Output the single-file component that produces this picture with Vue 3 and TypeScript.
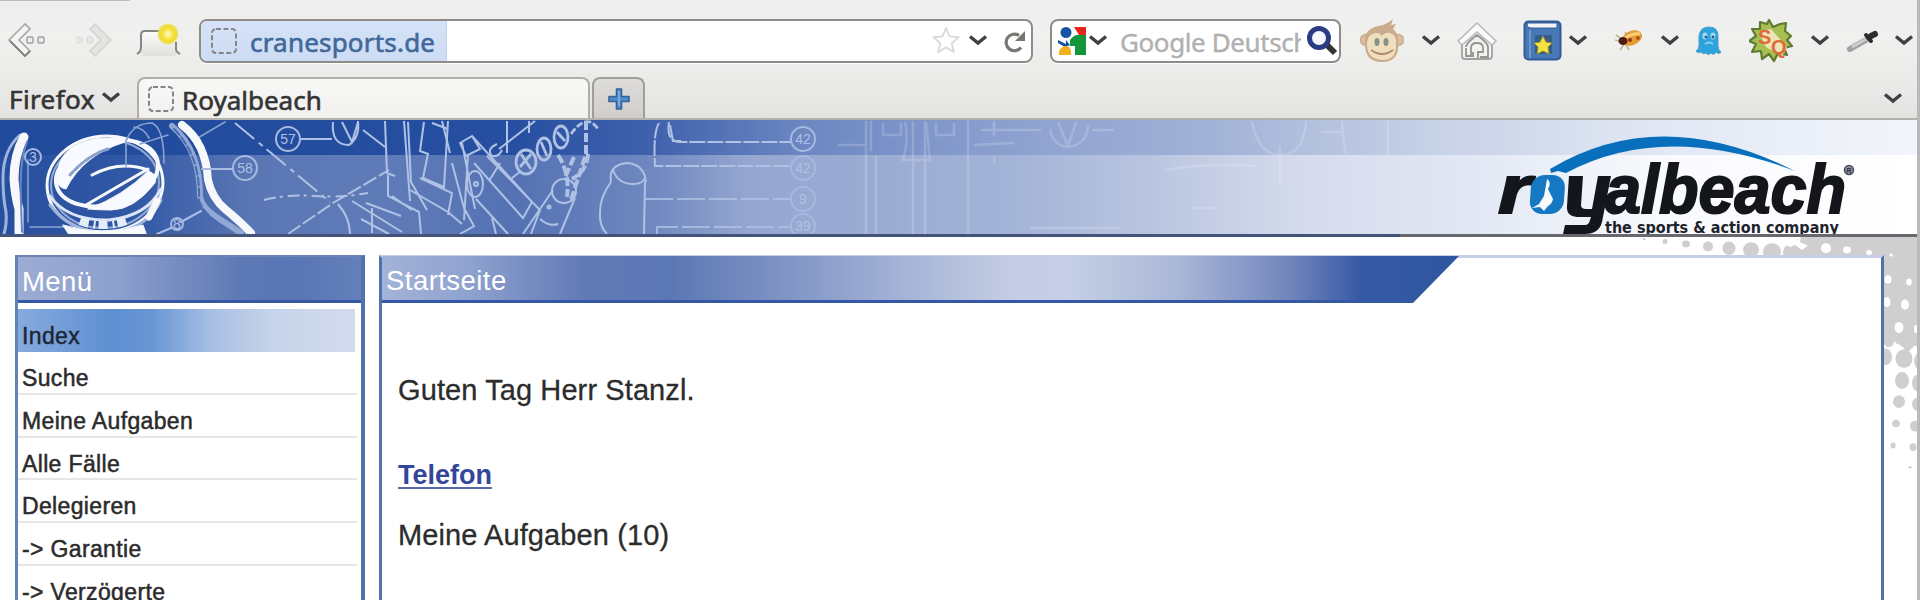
<script setup lang="ts">
interface Dot { x: number; y: number; rx: number; ry: number }
interface Marker { x: number; y: number; r: number; label: string }

const menu: string[] = ['Index', 'Suche', 'Meine Aufgaben', 'Alle Fälle', 'Delegieren', '-> Garantie', '-> Verzögerte']

const dot = (x: number, y: number, rx: number, ry: number = rx): Dot => ({ x, y, rx, ry })

const grayDots: Dot[] = [
  dot(1644, 240, 1.5), dot(1665, 243, 2.5, 3), dot(1686, 246, 4), dot(1708, 249, 5, 6), dot(1729, 251, 6.5, 8), dot(1751, 253, 8, 9),
  dot(1772, 255, 9, 10), dot(1794, 256, 11), dot(1816, 257, 12),
  dot(1885, 380, 7, 10), dot(1904, 382, 8.5, 11), dot(1920, 385, 6, 10), dot(1902, 408, 7, 10), dot(1918, 411, 6, 10),
  dot(1899, 433, 6, 7.5), dot(1918, 436, 6, 8), dot(1896, 459, 3.8, 4.5), dot(1915, 462, 5, 6.5), dot(1893, 485, 2.5, 3.5),
  dot(1913, 487, 3.5, 4.5), dot(1910, 511, 1.5)
]
const whiteDots: Dot[] = [
  dot(1826, 251, 5, 6), dot(1847, 253, 4), dot(1869, 256, 3), dot(1891, 259, 1.8),
  dot(1888, 288, 3.5, 5), dot(1909, 291, 2.8, 4), dot(1887, 315, 3.5, 6), dot(1905, 318, 4, 6), dot(1899, 345, 4.5, 6.5), dot(1916, 347, 2, 5)
]
const markers: Marker[] = [
  { x: 288, y: 139, r: 12, label: '57' }, { x: 245, y: 168, r: 12, label: '58' }, { x: 177, y: 224, r: 6, label: '8' }, { x: 33, y: 157, r: 8, label: '3' },
  { x: 803, y: 139, r: 12, label: '42' }, { x: 803, y: 168, r: 12, label: '42' }, { x: 803, y: 199, r: 12, label: '9' }, { x: 803, y: 226, r: 12, label: '39' }
]
</script>

<template>
  <div class="window">
    <header class="chrome">
      <div class="top-edge"></div>
      <div class="nav-row">
        <svg class="back" width="40" height="38" viewBox="0 0 40 38">
          <path d="M18 2 2 18l16 16 5-5-11-11 11-11z" fill="#f4f4f3" stroke="#a5a5a3" stroke-width="1.6" />
          <path d="M3 19l15 15 5-5" fill="none" stroke="#81817f" stroke-width="1.8" />
          <rect x="20" y="15" width="6" height="6" rx="1.5" fill="#eee" stroke="#9f9f9d" stroke-width="1.5" />
          <rect x="31" y="15" width="6" height="6" rx="1.5" fill="#eee" stroke="#9f9f9d" stroke-width="1.5" />
        </svg>
        <svg class="forward" width="40" height="38" viewBox="0 0 40 38">
          <path d="M22 2 38 18 22 34l-5-5 11-11L17 7z" fill="#e4e4e3" stroke="#d3d3d1" stroke-width="1.5" />
          <rect x="14" y="15" width="6" height="6" rx="1.5" fill="#e8e8e7" stroke="#d3d3d1" />
          <rect x="4" y="15" width="5" height="6" rx="1.5" fill="#e8e8e7" stroke="#d9d9d7" />
        </svg>
        <svg class="new-tab" width="47" height="38" viewBox="0 0 47 38">
          <defs>
            <linearGradient id="tabfade" x1="0" y1="0" x2="0" y2="1"><stop offset="0" stop-color="#fafafa" /><stop offset="1" stop-color="#dfdfdd" /></linearGradient>
            <radialGradient id="glow"><stop offset="0" stop-color="#fffbd0" /><stop offset=".5" stop-color="#f5e236" /><stop offset=".8" stop-color="#ecd93c" /><stop offset="1" stop-color="#f1e77b" stop-opacity=".3" /></radialGradient>
          </defs>
          <path d="M6 34V10h34v24z" fill="url(#tabfade)" />
          <path d="M1 32q4-2 4-7V13q0-4 4-4h16M40 20v7q0 3 4 5" fill="none" stroke="#858583" stroke-width="2" />
          <circle cx="32" cy="12" r="11" fill="url(#glow)" />
        </svg>

        <div class="field address">
          <div class="host">
            <svg width="28" height="28" viewBox="0 0 28 28"><rect x="2" y="2" width="24" height="24" rx="4" class="blank" /></svg>
            <span class="host-name">cranesports.de</span>
          </div>
          <svg class="star" width="30" height="30" viewBox="0 0 30 30"><path d="M15 2l3.6 8.4 9 .8-6.8 6 2 8.8L15 21.4 7.200 26l2-8.800-6.800-6 9-.8z" fill="#fff" stroke="#dadada" stroke-width="1.9" stroke-linejoin="round" /></svg>
          <svg class="chev addr-chev" width="20" height="14" viewBox="0 0 20 14"><path d="M2 2.500 10 9l8-6.500" /></svg>
          <svg class="reload" width="25" height="25" viewBox="0 0 25 25"><path d="M19 18.500A8.300 8.300 0 1 1 17 6.500" fill="none" stroke="#777672" stroke-width="3.200" /><path d="M23 2v10H13z" fill="#777672" /></svg>
        </div>

        <div class="field search">
          <svg class="google" width="30" height="30" viewBox="0 0 30 30">
            <path d="M16 1h12v8H16z" fill="#e4261c" /><path d="M12 14q4-5 7-5h9v20H17v-9h-5z" fill="#12963b" /><path d="M16 1l5 8h-5z" fill="#fff" />
            <circle cx="8" cy="6.500" r="5.500" fill="#1553a5" /><path d="M0 14l8 4v-4l4 5-5 2-7-4z" fill="#1553a5" />
            <path d="M1 29v-4q3-5 7-5t5 5v4z" fill="#f2b01d" />
          </svg>
          <svg class="chev" width="20" height="14" viewBox="0 0 20 14"><path d="M2 2.500 10 9l8-6.500" /></svg>
          <span class="engine">Google Deutschland</span>
          <svg class="lens" width="32" height="32" viewBox="0 0 32 32"><path d="M20 19l9 9" stroke="#333336" stroke-width="6" /><circle cx="13" cy="13" r="9.500" fill="#f4f7fb" stroke="#2b3b84" stroke-width="5" /></svg>
        </div>

        <svg class="monkey" width="44" height="46" viewBox="0 0 44 46">
          <circle cx="6" cy="22" r="5.500" fill="#d9bfa0" stroke="#c9ad90" stroke-width="1.500" /><circle cx="38" cy="22" r="5.500" fill="#d9bfa0" stroke="#c9ad90" stroke-width="1.500" />
          <path d="M5 24Q4 11 18 8q8-1 15-7l-2 6 5-1-3 5q6 5 5 13 2 20-16 20Q4 44 5 24z" fill="#caab8b" />
          <path d="M7 24q1-8 9-9 4 0 6 3 3-4 8-3 7 2 6 11 1 16-14 16Q6 41 7 24z" fill="#f0dfbd" />
          <ellipse cx="17" cy="24" rx="2.500" ry="4" fill="#84918b" /><ellipse cx="26" cy="24" rx="2.500" ry="4" fill="#84918b" />
          <path d="M11 32q11 8 22 0" fill="none" stroke="#ad8b6a" stroke-width="1.800" />
        </svg>
        <svg class="chev c1" width="20" height="14" viewBox="0 0 20 14"><path d="M2 2.500 10 9l8-6.500" /></svg>
        <svg class="home" width="40" height="40" viewBox="0 0 40 40">
          <path d="M5 21v14q0 3 3 3h24q3 0 3-3V21" fill="#f2f2f1" stroke="#a1a1a0" stroke-width="1.800" />
          <path d="M20 2 1 20l4 4 15-13 15 13 4-4z" fill="#fbfbfb" stroke="#b8b8b6" stroke-width="1.600" stroke-linejoin="round" />
          <path d="M9 26q0-4 11-12 11 8 11 12M14 35V27q0-5 6-5t6 5v4h-5v6M9 27v8h7v-4M31 26v10h-8" fill="none" stroke="#949492" stroke-width="1.800" />
        </svg>
        <svg class="book" width="40" height="42" viewBox="0 0 40 42">
          <rect x="1.500" y="1.500" width="36" height="38" rx="4" fill="#4878b5" stroke="#2f5b98" stroke-width="2" />
          <path d="M5 3h29v5H8q-4 0-4-3z" fill="#f2f5f8" stroke="#345c95" /><path d="M7 10v28" stroke="#6c98cc" stroke-width="2" />
          <rect x="12" y="15" width="17" height="19" fill="#365f87" /><path d="M20 16l3 6 6 1-4 4 1 7-6-3-6 3 1-7-4-4 6-1z" fill="#f5e23e" stroke="#958e36" />
        </svg>
        <svg class="chev c2" width="20" height="14" viewBox="0 0 20 14"><path d="M2 2.500 10 9l8-6.500" /></svg>
        <svg class="bug" width="30" height="26" viewBox="0 0 30 26">
          <path d="M2 7l7 5M1 12l8 2M6 22l5-7M15 22l-3-5M11 4l4 5" stroke="#c6b698" stroke-width="1.600" />
          <ellipse cx="18" cy="10" rx="10.500" ry="7" transform="rotate(-23 18 10)" fill="#e69a32" /><path d="M11 10q8-5 15-4" stroke="#fbd077" stroke-width="3" fill="none" />
          <ellipse cx="9" cy="13" rx="4.500" ry="4" fill="#4c1c17" /><circle cx="16" cy="12" r="2" fill="#963719" /><circle cx="24" cy="10" r="2" fill="#b1531d" />
        </svg>
        <svg class="chev c3" width="20" height="14" viewBox="0 0 20 14"><path d="M2 2.500 10 9l8-6.500" /></svg>
        <svg class="ghost" width="28" height="30" viewBox="0 0 28 30">
          <path d="M4 20V10q1-9 10-9t9 9v10q0 4 3 6-2 3-5 0-2 4-5 1-3 3-5 0-3 2-5-1-3 2-5-1 3-2 3-5z" fill="#2ba3dc" stroke="#4e9fc7" />
          <ellipse cx="10" cy="10" rx="2.500" ry="3.500" fill="#a5daf3" /><ellipse cx="18" cy="10" rx="2.500" ry="3.500" fill="#a5daf3" /><circle cx="11" cy="11" r="1.500" fill="#1c648e" /><circle cx="18" cy="11" r="1.500" fill="#1c648e" /><path d="M10 18q4-3 8 0" stroke="#8bd0f0" stroke-width="2" fill="none" />
        </svg>
        <svg class="gear" width="46" height="44" viewBox="0 0 46 44">
          <path d="M20 1l4 7 7-3 6-1-1 8 6 5-4 4 5 6-8 2 3 7-9-2-4 8-5-7-7 5-1-8-9 1 4-8-7-3 7-5-4-7 8 0 0-7 7 2z" fill="#a8bd52" stroke="#5d7c30" stroke-width="2.200" stroke-linejoin="round" />
          <path d="M10 13l12-3 16 18-5 9-16-9z" fill="#efe4b8" />
          <text x="9" y="25" class="gear-text">S</text><text x="22" y="35" class="gear-text">Q</text>
        </svg>
        <svg class="chev c4" width="20" height="14" viewBox="0 0 20 14"><path d="M2 2.500 10 9l8-6.500" /></svg>
        <svg class="dropper" width="34" height="24" viewBox="0 0 34 24">
          <path d="M4 20 20 11" stroke="#a0a0a0" stroke-width="6" stroke-linecap="round" /><path d="M6 18 20 10" stroke="#cdcdcd" stroke-width="3" /><path d="M20 6l5 6M22 9l7-4" stroke="#2d2d2f" stroke-width="4" stroke-linecap="round" /><path d="M25 7l4-2" stroke="#2d2d2f" stroke-width="6" stroke-linecap="round" />
        </svg>
        <svg class="chev c5" width="20" height="14" viewBox="0 0 20 14"><path d="M2 2.500 10 9l8-6.500" /></svg>
      </div>

      <div class="tab-row">
        <div class="app-menu"><span class="app-name">Firefox</span>
          <svg class="chev" width="20" height="14" viewBox="0 0 20 14"><path d="M2 2.500 10 9l8-6.500" /></svg>
        </div>
        <div class="tab">
          <svg width="28" height="28" viewBox="0 0 28 28"><rect x="2" y="2" width="24" height="24" rx="4" class="blank" /></svg>
          <span class="tab-name">Royalbeach</span>
        </div>
        <div class="add-tab">
          <svg width="24" height="24" viewBox="0 0 24 24"><path d="M9.500 2h5v7.500H22v5h-7.500V22h-5v-7.500H2v-5h7.500z" fill="#4c8bce" stroke="#3a6295" stroke-width="1.600" stroke-linejoin="round" /><path d="M12 4v15" stroke="#72aee2" stroke-width="2" /></svg>
        </div>
        <svg class="chev list-chev" width="20" height="14" viewBox="0 0 20 14"><path d="M2 2.500 10 9l8-6.500" /></svg>
      </div>
    </header>

    <svg class="banner" width="1917" height="117" viewBox="0 120 1917 117">
      <defs>
        <linearGradient id="upper" gradientUnits="userSpaceOnUse" x1="0" y1="0" x2="1917" y2="0">
          <stop offset="0" stop-color="#204a9b" /><stop offset=".27" stop-color="#274fa1" /><stop offset=".34" stop-color="#4062ad" /><stop offset=".42" stop-color="#6c87c2" /><stop offset=".52" stop-color="#8b9fcf" />
          <stop offset=".63" stop-color="#a1b2d7" /><stop offset=".75" stop-color="#c8d2e7" /><stop offset=".87" stop-color="#e2e8f4" /><stop offset="1" stop-color="#f2f5fb" />
        </linearGradient>
        <linearGradient id="lower" gradientUnits="userSpaceOnUse" x1="0" y1="0" x2="1917" y2="0">
          <stop offset="0" stop-color="#274f9f" /><stop offset=".07" stop-color="#3158a5" /><stop offset=".13" stop-color="#5a76b4" /><stop offset=".2" stop-color="#5f7bb7" /><stop offset=".27" stop-color="#5472b3" /><stop offset=".34" stop-color="#6f88c0" />
          <stop offset=".39" stop-color="#95a6d0" /><stop offset=".52" stop-color="#a1b2d7" /><stop offset=".6" stop-color="#b9c5e0" /><stop offset=".68" stop-color="#d4dbec" /><stop offset=".77" stop-color="#e2e8f4" /><stop offset=".87" stop-color="#f9fafd" /><stop offset="1" stop-color="#fff" />
        </linearGradient>
      </defs>
      <rect x="0" y="120" width="1917" height="35" fill="url(#upper)" />
      <rect x="0" y="155" width="1917" height="80" fill="url(#lower)" />

      <!-- watch and strap -->
      <g fill="none" stroke="#f6f8fc" stroke-linecap="round">
        <path d="M20 135Q3 150 3 178q0 20 3 34 1 12-2 22" stroke="#9db3dd" stroke-width="3" />
        <path d="M24 137q-10 18-10 42 1 16 5 30v24" stroke-width="9" />
        <path d="M27 142q-8 20-6 60l1 30" stroke="#6a87c1" stroke-width="2" />
        <path d="M28 160v62M30 227h40" stroke="#8ba4d5" stroke-width="1.500" />
        <ellipse cx="105" cy="184" rx="58" ry="48" stroke-width="3" transform="rotate(-5 105 184)" />
        <ellipse cx="105" cy="184" rx="54" ry="44" stroke="#93aad7" stroke-width="2" transform="rotate(-5 105 184)" />
        <ellipse cx="107" cy="173" rx="52" ry="32" stroke-width="4" transform="rotate(-14 107 173)" />
        <path d="M57 180Q56 146 94 139q20-3 31 3Q83 155 66 189q-8-1-9-9z" fill="#f8faff" stroke-width="1" />
        <path d="M70 175q18-20 38-26" stroke="#8da2cb" stroke-width="3" stroke-dasharray="5 2" />
        <path d="M88 209q35-13 60-38 10 3 7 12-21 27-44 27-12 0-23-1z" fill="#f8faff" stroke-width="1" />
        <path d="M86 205 148 169M92 175q28-15 56-5" stroke-width="3" />
        <path d="M49 195q18 26 60 25 38-4 52-31" stroke="#dce5f5" stroke-width="3" />
        <path d="M50 205q24 31 65 27 34-5 46-32" stroke="#a0b4db" stroke-width="3" />
        <path d="M80 221q22 8 46 0" stroke="#e5edf9" stroke-width="8" stroke-dasharray="9 5 2 3" stroke-linecap="butt" />
        <path d="M63 225q38 12 80 0l4 11H70z" fill="#f6f9fe" stroke-width="1" />
        <path d="M149 217l8-16" stroke-width="7" />
        <path d="M126 166v-25q7-18 26-18 12 5 12 40M134 127q10 1 15 11M140 144l28-9M196 139l29-17" stroke="#86a0d2" stroke-width="1.700" />
        <path d="M172 126q28 24 28 70 1 10 15 20l26 17" stroke="#91a8d5" stroke-width="6" />
        <path d="M174 129q27 27 25 72 5 12 19 22" stroke="#456bb1" stroke-width="2" stroke-dasharray="8 3" />
        <path d="M182 125q24 18 26 55 4 18 17 29 17 14 26 24" stroke-width="8" />
        <path d="M202 169h30M201 211l-20 11M171 228l-14 6" stroke="#a9bde3" stroke-width="2" />
      </g>

      <!-- mechanical drawing -->
      <g class="lines">
        <path d="M235 123 330 202" stroke-dasharray="25 6 5 5" /><path d="M264 200q25-6 50-4 25 2 54-3" stroke-dasharray="12 4 3 5" /><path d="M288 234l45-31 56-33" stroke-dasharray="15 3" />
        <path d="M301 139h31M333 122q-2 23 16 23 11-8 9-24M342 122l10 20 6-20M363 130l22 17" />
        <path d="M385 121l2 52 8 3M404 121l6 80M408 122l3 60 16 28M424 122l-4 29 8 3-5 24 21 9 4-66M388 175v21l31 16 2 22M410 190l38 22 14 12M420 178l32 15-4 22M392 196l20 14M338 204q12 14 12 30M352 201l50 31M361 219l28 15M372 208v25M366 203l35 13" />
        <path d="M460 143l12-7 8 13-14 7zM472 136l60 66-9 16-49-55M462 143l13 66M468 154l-4 66M452 163l12 45 10 18-14 8M487 156l53 54-9 24M499 149l36-28M507 121v32M529 121v12M442 121l8 32M432 123l16 6M476 199l32 35M492 218l4 16M489 181l11-18M512 178l9-7" />
        <ellipse cx="475" cy="184" rx="8" ry="13" /><circle cx="476" cy="184" r="2" />
        <path d="M497 144q-11 5-5 12 7 1 10-6" stroke-width="3" />
        <g><ellipse cx="526" cy="162" rx="10" ry="12" /><path d="M521 154l10 15m0-15-11 13" /><ellipse cx="544" cy="149" rx="7" ry="11" /><path d="M541 142l6 14" /><ellipse cx="561" cy="137" rx="7" ry="11" /><path d="M557 132l8 9" /><path d="M571 134q16-22 27-5" stroke-dasharray="7 2" /></g>
        <path d="M586 121v33l-15 46M558 155q12 18 9 42M574 157l-10 23M588 154q-1 17-16 25" class="chain" />
        <ellipse cx="564" cy="191" rx="12" ry="12" /><path d="M553 190l-30 44M575 198l-15 36M540 219q9 8 18 5" /><circle cx="549" cy="207" r="1.500" />
        <path d="M611 182q-11 15-11 30-1 14 7 22M645 182l-1 52M611 182q-3-17 16-19 17 1 19 19M613 170q5 14 20 14 10 0 12-6" />
        <path d="M659 123q-6 9-4 43h136M669 122q-3 20 11 20h112" stroke-dasharray="16 2" /><path d="M645 199h146M657 234v-7h134" class="dim" stroke-dasharray="28 4" /><path d="M670 125l3 16h8" />
      </g>
      <g v-for="m in markers" :key="`${m.x}-${m.y}`">
        <circle :cx="m.x" :cy="m.y" :r="m.r" class="ring" /><text :x="m.x" :y="m.y + 5" class="marker-text">{{ m.label }}</text>
      </g>
      <g class="faint">
        <path d="M838 145h27M866 121v113M876 156v78M913 121v113M925 121v113M968 121v113M871 121v30M905 122q4 18-2 38h27l-4-38M883 123v12h18v-12M936 123v12h18v-12M981 130h60M994 121v15M974 145l40-2M994 156v8M1050 129q2 16 18 18 20-3 20-22M1058 122l10 24 8-24M1092 130h22" />
        <path d="M1252 121q6 34 29 34t25-34M1280 146v38M1321 132h20M1342 121q2 25 4 33M1388 121v33M1165 170q40-7 90-4M1192 208h22M1030 228h90" />
      </g>

      <!-- company logo -->
      <path d="M1550 169Q1660 103 1795 171Q1663 121 1566 173l-8-2-7 2z" fill="#086fbd" />
      <text x="1498" y="213" textLength="33" lengthAdjust="spacingAndGlyphs" class="brand">r</text>
      <rect x="1530" y="175" width="34" height="39" rx="13" fill="#1678c2" transform="skewX(-4) translate(14)" />
      <path d="M1547 179q5 3 1 10l5 10q-1 5-5 7l-4 5-4-4-8 1 7-4 5-8z" fill="#f6fbff" />
      <path d="M1569 176h14l-2 29q0 4 5 4h6l6-33h13l-9 46q-3 12-17 12h-22l2-9h20q4 0 5-5l1-3h-14q-11-1-10-11z" fill="#14161c" />
      <text x="1605" y="213" textLength="241" lengthAdjust="spacingAndGlyphs" class="brand">albeach</text>
      <circle cx="1849" cy="170" r="4.500" fill="#8b919f" stroke="#474b54" stroke-width="1.500" /><text x="1846.500" y="173" class="reg">R</text>
      <text x="1605" y="233" textLength="234" lengthAdjust="spacingAndGlyphs" class="claim">the sports &amp; action company</text>
      <rect x="0" y="234" width="1460" height="3" fill="#435379" /><rect x="1400" y="234" width="517" height="3" fill="#66686d" />
    </svg>

    <main class="page">
      <svg class="halftone" width="290" height="280" viewBox="1630 237 290 280">
        <g transform="translate(0 36.6) scale(1 .843)">
          <path d="M1783 236h137v135l-5-5-7 8-10-10-7 8-7-7V259h-90q15-8 9-13z" fill="#cfcfcf" />
          <ellipse v-for="d in grayDots" :key="`g${d.x}-${d.y}`" :cx="d.x" :cy="d.y" :rx="d.rx" :ry="d.ry" fill="#cfcfcf" />
          <ellipse v-for="d in whiteDots" :key="`w${d.x}-${d.y}`" :cx="d.x" :cy="d.y" :rx="d.rx" :ry="d.ry" fill="#fff" />
          <path d="M1783 236h18l-1 8 8 4-6 5-7-6-5 3-8-7zM1895 361l3 6 6 2-6 3-3 6-3-6-6-3 6-2z" fill="#fff" />
        </g>
      </svg>
      <nav class="menu">
        <h2 class="heading menu-heading">Menü</h2>
        <ul>
          <li v-for="(item, i) in menu" :key="item" :class="{ active: i === 0 }"><span>{{ item }}</span></li>
        </ul>
      </nav>
      <section class="content">
        <div class="ribbon"><h2 class="heading title"><span>Startseite</span></h2></div>
        <p class="greeting">Guten Tag Herr Stanzl.</p>
        <a class="phone">Telefon</a>
        <p class="tasks">Meine Aufgaben (10)</p>
      </section>
    </main>
  </div>
</template>

<style>
html, body { margin: 0; overflow: hidden; background: #fff; }
</style>

<style scoped>
* { box-sizing: border-box; }
.window { width: 1920px; height: 600px; overflow: hidden; border-right: 3px solid #b9b9b9; background: #fff; font-family: "Liberation Sans", Arial, sans-serif; }
.chrome { height: 120px; background: linear-gradient(#eeeeee, #f0f0ef 30%, #eaeae9 70%, #e4e3e1); border-bottom: 2px solid #b3b1ae; font-family: "Noto Sans", "Open Sans", sans-serif; color: #343434; overflow: hidden; }
.top-edge { width: 130px; height: 1px; background: #bcbcbc; border-radius: 0 0 4px 0; }
svg { display: block; flex: none; }
.nav-row { display: flex; align-items: center; height: 44px; margin-top: 18px; }
.chev path { fill: none; stroke: #404040; stroke-width: 3.4; }
.back { margin-left: 7px; }
.forward { margin-left: 26px; }
.new-tab { margin-left: 23px; }
.field { display: flex; align-items: center; height: 44px; border: 2.5px solid #8f8c88; border-radius: 8px; background: #fff; box-shadow: 0 1px 1px #fff; overflow: hidden; }
.address { margin-left: 16px; width: 834px; }
.host { display: flex; align-items: center; align-self: stretch; width: 246px; padding-left: 9px; background: linear-gradient(#d5e2f7, #cddcf4); border-right: 1px solid #c0d0e8; }
.blank { fill: none; stroke: #858585; stroke-width: 2; stroke-dasharray: 5 2.5; }
.host-name { margin-left: 12px; font-size: 26px; letter-spacing: .2px; line-height: 38px; color: #41689a; -webkit-text-stroke: .6px #41689a; white-space: nowrap; padding-top: 1px; }
.star { margin-left: 484px; }
.addr-chev { margin-left: 7px; }
.reload { margin-left: 14px; }
.search { margin-left: 17px; width: 291px; padding-left: 6px; }
.engine { margin-left: 12px; width: 181px; overflow: hidden; white-space: nowrap; font-size: 26px; letter-spacing: -.4px; line-height: 38px; color: #b0b0b0; -webkit-text-stroke: .4px #b0b0b0; padding-top: 1px; }
.lens { margin-left: 5px; }
.monkey { margin-left: 19px; }
.c1 { margin-left: 17px; }
.home { margin-left: 16px; }
.book { margin-left: 26px; }
.c2 { margin-left: 5px; }
.bug { margin-left: 26px; }
.c3 { margin-left: 16px; }
.ghost { margin-left: 15px; }
.gear { margin-left: 26px; }
.c4 { margin-left: 15px; }
.dropper { margin-left: 16px; }
.c5 { margin-left: 14px; }
.gear-text { font: bold 20px "Liberation Sans", sans-serif; fill: #df6a35; }
.tab-row { display: flex; align-items: flex-end; height: 42px; margin-top: 14px; }
.app-menu { display: flex; align-items: center; width: 137px; height: 42px; padding-left: 9px; }
.app-name { width: 92px; font-size: 26px; letter-spacing: .4px; color: #343434; -webkit-text-stroke: .6px #343434; padding-top: 1px; }
.tab { display: flex; align-items: center; width: 453px; height: 42px; padding-left: 8px; border: 2px solid #b0ada9; border-bottom: 0; border-radius: 8px 8px 0 0; background: linear-gradient(#f8f8f7, #f1f0ef); }
.tab-name { margin-left: 7px; font-size: 26px; letter-spacing: 0; color: #343434; -webkit-text-stroke: .6px #343434; padding-top: 2px; }
.add-tab { display: flex; align-items: center; justify-content: center; width: 53px; height: 42px; margin-left: 2px; border: 2px solid #a09e9a; border-bottom: 0; border-radius: 8px 8px 0 0; background: linear-gradient(#dddcda, #cfcecb); }
.list-chev { margin: 0 14px 13px auto; }
.lines path, .lines ellipse, .lines circle { fill: none; stroke: #afc2e5; stroke-width: 2; }
.lines g ellipse, .lines g path { stroke-width: 2.8; }
.lines .chain { stroke-width: 4; stroke-dasharray: 9 3; }
.lines .dim { stroke-opacity: .8; }
.ring { fill: none; stroke: #a5b9e0; stroke-width: 2; }
.marker-text { fill: #b0c1e5; font: 14px "Liberation Sans", sans-serif; text-anchor: middle; }
.faint path { fill: none; stroke: #fff; stroke-opacity: .18; stroke-width: 2.5; }
.brand { font: italic bold 69px "Liberation Sans", Arial, sans-serif; fill: #14161c; stroke: #14161c; stroke-width: 2px; }
.claim { font: bold 15px "DejaVu Sans", sans-serif; fill: #20232c; }
.reg { font: bold 7px "Liberation Sans", sans-serif; fill: #30343c; }
.page { position: relative; display: flex; gap: 14px; height: 363px; padding: 18px 33px 0 15px; }
.halftone { position: absolute; right: -3px; top: 0; }
.menu { width: 350px; border-left: 3px solid #6683b8; border-right: 4px solid #5272ad; border-top: 2px solid #6d83b5; }
.content { position: relative; width: 1505px; border-left: 3px solid #5272ad; border-right: 3px solid #5272ad; border-top: 3px solid #c5d0e8; background: #fff; }
.heading { margin: 0; height: 46px; font-weight: normal; font-size: 27.5px; letter-spacing: .45px; line-height: 50px; color: #fff; border-bottom: 3px solid #3458a4; }
.menu-heading { padding-left: 4px; background: linear-gradient(90deg, #9cacd3, #8c9fcd 30%, #5d79b5 65%, #5875b4 80%, #6480ba); }
.ribbon { margin-top: -2px; }
.title { width: 1077px; height: 47px; padding-left: 4px; clip-path: polygon(0 0, 100% 0, 1031px 100%, 0 100%); background: linear-gradient(90deg, #a3b3d8, #8fa2cf 8%, #6079b5 19%, #5b78b5 27%, #8295c6 38%, #a3b2d6 48%, #c3cce3 58%, #c5cfe5 64%, #a9b6d7 74%, #7387bd 84%, #3659a5 91%, #2f56a2); }
ul { margin: 6px 0 0; padding: 0; list-style: none; }
li { height: 42.8px; padding-left: 4px; margin-right: 4px; border-bottom: 2px solid #e6e6e6; font-size: 23px; line-height: 26px; padding-top: 13px; color: #2b2b2b; white-space: nowrap; letter-spacing: .35px; -webkit-text-stroke: .5px #2b2b2b; }
li.active { height: 43px; padding-top: 14px; margin-right: 6px; border: 0; background: linear-gradient(90deg, #86abdd, #5e8fd2 28%, #6997d5 40%, #a9c0e4 58%, #c6d3ea 75%, #d3dcee); color: #172541; }
p { margin: 0; color: #2c2c2c; font-size: 29px; line-height: 34px; white-space: nowrap; -webkit-text-stroke: .3px #2c2c2c; }
.greeting { margin: 70px 0 0 16px; letter-spacing: .1px; }
.phone { display: block; width: 94px; height: 30px; margin: 52px 0 0 16px; font-size: 27px; font-weight: bold; line-height: 32px; color: #35459a; border-bottom: 2px solid #5a69a5; }
.tasks { margin: 29px 0 0 16px; letter-spacing: .1px; }
</style>
